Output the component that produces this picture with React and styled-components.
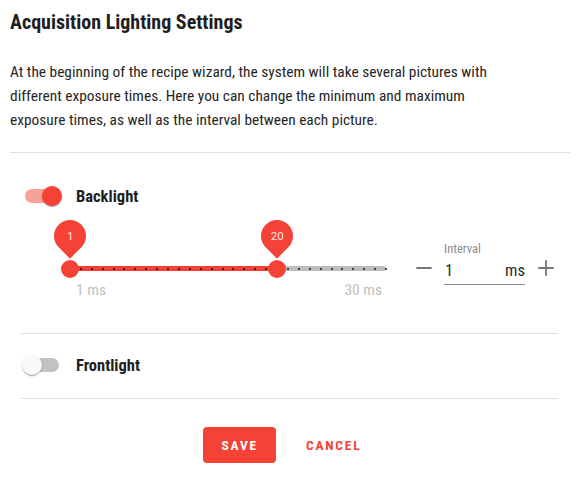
import React, { useState } from 'react'
import styled, { createGlobalStyle } from 'styled-components'
import { Minus, Plus } from 'lucide-react'

const RED = '#f44336'
const FONT = '"Liberation Sans Narrow", "Roboto Condensed", Roboto, sans-serif'

const GlobalStyle = createGlobalStyle`
    body {
        margin: 0;
        background: #ffffff;
        font-family: ${FONT};
        color: #222222;
    }
`

const Page = styled.div`
    padding: 10px 9px 0 10px;
`

const Title = styled.h2`
    margin: 0;
    font-size: 20px;
    line-height: 24px;
    font-weight: 700;
    color: #1e1e1e;
`

const Description = styled.p`
    margin: 26px 0 20px;
    font-size: 15.4px;
    line-height: 24px;
    color: #262626;
`

const Rule = styled.div`
    height: 1px;
    background: #e0e0e0;
    margin-top: ${p => p.$top || 0}px;
`

const Lights = styled.section`
    margin: 0 12px 0 11px;
`

const LightRow = styled.div`
    display: flex;
    align-items: center;
    gap: 14px;
    height: 24px;
    margin-top: ${p => p.$top}px;
    padding-left: 1px;
`

const Toggle = styled.button`
    position: relative;
    width: 40px;
    height: 20px;
    padding: 0;
    border: none;
    background: transparent;
    cursor: pointer;
`

const ToggleTrack = styled.span`
    position: absolute;
    left: 3px;
    top: 3px;
    width: 34px;
    height: 14px;
    border-radius: 7px;
    background: ${p => (p.$on ? '#f8a19b' : '#c2c2c2')};
`

const ToggleThumb = styled.span`
    position: absolute;
    top: 0;
    left: ${p => (p.$on ? 20 : 0)}px;
    width: 20px;
    height: 20px;
    border-radius: 50%;
    background: ${p => (p.$on ? RED : '#fafafa')};
    box-shadow: 0 2px 1px -1px rgba(0, 0, 0, 0.2), 0 1px 1px 0 rgba(0, 0, 0, 0.14), 0 1px 3px 0 rgba(0, 0, 0, 0.12);
`

const LightLabel = styled.span`
    font-size: 16.5px;
    font-weight: 700;
    color: #1e1e1e;
`

const SliderRow = styled.div`
    display: flex;
    align-items: flex-start;
    height: 92px;
`

const SliderBox = styled.div`
    display: flex;
    flex-direction: column;
    width: 317px;
    margin-left: 49px;
`

const Rail = styled.div`
    position: relative;
    height: 5px;
    margin-top: 58px;
    border-radius: 3px;
    background: #bdbdbd;
`

const RailFill = styled.div`
    position: absolute;
    top: 0;
    bottom: 0;
    background: ${RED};
`

const Mark = styled.span`
    position: absolute;
    top: 1.5px;
    width: 2px;
    height: 2px;
    margin-left: -1px;
    background: rgba(0, 0, 0, 0.65);
`

const Thumb = styled.span`
    position: absolute;
    top: -6.5px;
    width: 18px;
    height: 18px;
    margin-left: -9px;
    border-radius: 50%;
    background: ${RED};
`

const Pin = styled.span`
    position: absolute;
    top: -46.5px;
    width: 32px;
    height: 32px;
    margin-left: -16px;
    border-radius: 50% 50% 50% 0;
    background: ${RED};
    transform: rotate(-45deg);
    display: flex;
    align-items: center;
    justify-content: center;
`

const PinText = styled.span`
    transform: rotate(45deg);
    color: #fdeae8;
    font-size: 11.5px;
    font-family: Roboto, sans-serif;
`

const RangeLabels = styled.div`
    display: flex;
    justify-content: space-between;
    margin-top: 9px;
    padding: 0 4px 0 6px;
    font-size: 15.5px;
    line-height: 20px;
    color: #c0c0c0;
`

const IntervalGroup = styled.div`
    display: flex;
    align-items: center;
    margin-top: 34px;
    margin-left: 26px;
`

const StepButton = styled.button`
    display: flex;
    padding: 0;
    margin-top: 9px;
    border: none;
    background: transparent;
    color: #757575;
    cursor: pointer;
`

const Field = styled.label`
    display: flex;
    flex-direction: column;
    width: 81px;
    margin: 0 9px 0 8px;
`

const FieldLabel = styled.span`
    font-size: 12.5px;
    line-height: 14px;
    color: #8a8a8a;
`

const FieldInputRow = styled.div`
    display: flex;
    align-items: center;
    height: 28px;
    border-bottom: 1px solid #8a8a8a;
`

const FieldInput = styled.input`
    flex: 1;
    min-width: 0;
    padding: 0 0 0 1px;
    border: none;
    outline: none;
    background: transparent;
    font-family: ${FONT};
    font-size: 16.5px;
    color: #2a2a2a;
`

const Unit = styled.span`
    font-size: 16.5px;
    color: #2a2a2a;
`

const Actions = styled.div`
    display: flex;
    justify-content: center;
    gap: 12px;
    margin-top: 28px;
    padding-left: 4px;
`

const ActionButton = styled.button`
    height: 36px;
    padding: 0 18px;
    border: none;
    border-radius: 4px;
    background: ${p => (p.$primary ? RED : 'transparent')};
    color: ${p => (p.$primary ? '#ffffff' : RED)};
    font-family: ${FONT};
    font-size: 13.5px;
    font-weight: 700;
    letter-spacing: 1.8px;
    cursor: pointer;
`

const MIN = 1
const MAX = 30

const pct = v => ((v - MIN) / (MAX - MIN)) * 100

const RangeSlider = ({ low, high }) => {
    const marks = []
    for (let v = MIN; v <= MAX; v++) marks.push(v)
    return (
        <SliderBox>
            <Rail>
                <RailFill style={{ left: `${pct(low)}%`, width: `${pct(high) - pct(low)}%` }} />
                {marks.map(v => (
                    <Mark key={v} style={{ left: `${pct(v)}%` }} />
                ))}
                {[low, high].map(v => (
                    <React.Fragment key={v}>
                        <Pin style={{ left: `${pct(v)}%` }}>
                            <PinText>{v}</PinText>
                        </Pin>
                        <Thumb style={{ left: `${pct(v)}%` }} />
                    </React.Fragment>
                ))}
            </Rail>
            <RangeLabels>
                <span>{MIN} ms</span>
                <span>{MAX} ms</span>
            </RangeLabels>
        </SliderBox>
    )
}

const App = () => {
    const [backlight, setBacklight] = useState(true)
    const [frontlight, setFrontlight] = useState(false)
    const [interval, setInterval] = useState(1)

    return (
        <>
            <GlobalStyle />
            <Page>
                <Title>Acquisition Lighting Settings</Title>
                <Description>
                    At the beginning of the recipe wizard, the system will take several pictures with<br />
                    different exposure times. Here you can change the minimum and maximum<br />
                    exposure times, as well as the interval between each picture.
                </Description>
                <Rule />
                <Lights>
                    <LightRow $top={31}>
                        <Toggle onClick={() => setBacklight(!backlight)}>
                            <ToggleTrack $on={backlight} />
                            <ToggleThumb $on={backlight} />
                        </Toggle>
                        <LightLabel>Backlight</LightLabel>
                    </LightRow>
                    <SliderRow>
                        <RangeSlider low={1} high={20} />
                        <IntervalGroup>
                            <StepButton onClick={() => setInterval(Math.max(1, interval - 1))}>
                                <Minus size={24} strokeWidth={1.8} />
                            </StepButton>
                            <Field>
                                <FieldLabel>Interval</FieldLabel>
                                <FieldInputRow>
                                    <FieldInput value={interval} onChange={e => setInterval(e.target.value)} />
                                    <Unit>ms</Unit>
                                </FieldInputRow>
                            </Field>
                            <StepButton onClick={() => setInterval(Number(interval) + 1)}>
                                <Plus size={24} strokeWidth={1.8} />
                            </StepButton>
                        </IntervalGroup>
                    </SliderRow>
                    <Rule $top={33} />
                    <LightRow $top={19}>
                        <Toggle onClick={() => setFrontlight(!frontlight)}>
                            <ToggleTrack $on={frontlight} />
                            <ToggleThumb $on={frontlight} />
                        </Toggle>
                        <LightLabel>Frontlight</LightLabel>
                    </LightRow>
                    <Rule $top={21} />
                    <Actions>
                        <ActionButton $primary>SAVE</ActionButton>
                        <ActionButton>CANCEL</ActionButton>
                    </Actions>
                </Lights>
            </Page>
        </>
    )
}

export default App
